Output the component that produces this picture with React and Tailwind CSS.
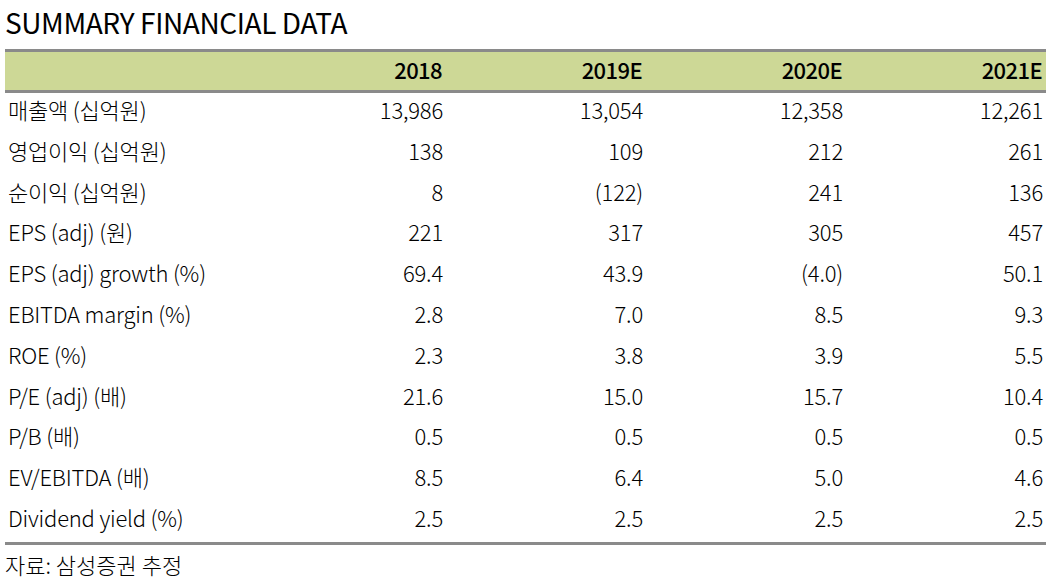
import React from "react";

const rows = [
  ["매출액 (십억원)", "13,986", "13,054", "12,358", "12,261"],
  ["영업이익 (십억원)", "138", "109", "212", "261"],
  ["순이익 (십억원)", "8", "(122)", "241", "136"],
  ["EPS (adj) (원)", "221", "317", "305", "457"],
  ["EPS (adj) growth (%)", "69.4", "43.9", "(4.0)", "50.1"],
  ["EBITDA margin (%)", "2.8", "7.0", "8.5", "9.3"],
  ["ROE (%)", "2.3", "3.8", "3.9", "5.5"],
  ["P/E (adj) (배)", "21.6", "15.0", "15.7", "10.4"],
  ["P/B (배)", "0.5", "0.5", "0.5", "0.5"],
  ["EV/EBITDA (배)", "8.5", "6.4", "5.0", "4.6"],
  ["Dividend yield (%)", "2.5", "2.5", "2.5", "2.5"],
];

const years = ["2018", "2019E", "2020E", "2021E"];

export default function App() {
  return (
    <div
      className="w-[1061px] h-[582px] bg-white text-black overflow-hidden"
      style={{ fontFamily: '"Noto Sans CJK KR", "Noto Sans", sans-serif' }}
    >
      <div className="pl-[5px] h-[49px] text-[28px] tracking-[-0.4px] leading-[44px] font-normal">
        SUMMARY FINANCIAL DATA
      </div>

      <div className="ml-[5px] w-[1041px]">
        <div className="grid grid-cols-[238px_200px_200px_200px_200px] h-[44px] pb-[4px] border-y-[3px] border-[#8a8a8a] bg-[#cdd896] text-[22px] font-medium tracking-[-0.6px] items-center">
          <div />
          {years.map((y) => (
            <div key={y} className="text-right pr-[1px]">
              {y}
            </div>
          ))}
        </div>

        {rows.map((r) => (
          <div
            key={r[0]}
            className="grid grid-cols-[238px_200px_200px_200px_200px] h-[40.8px] pb-[8px] items-center text-[22px] font-light tracking-[-0.2px]"
          >
            <div className="pl-[3px] whitespace-nowrap">{r[0]}</div>
            {r.slice(1).map((v, i) => (
              <div key={i} className="text-right pr-0">
                {v}
              </div>
            ))}
          </div>
        ))}

        <div className="border-t-[3px] border-[#8a8a8a]" />
      </div>

      <div className="pl-[5px] pt-[2px] text-[22px] leading-[34px] font-light tracking-[0px]">
        자료: 삼성증권 추정
      </div>
    </div>
  );
}
